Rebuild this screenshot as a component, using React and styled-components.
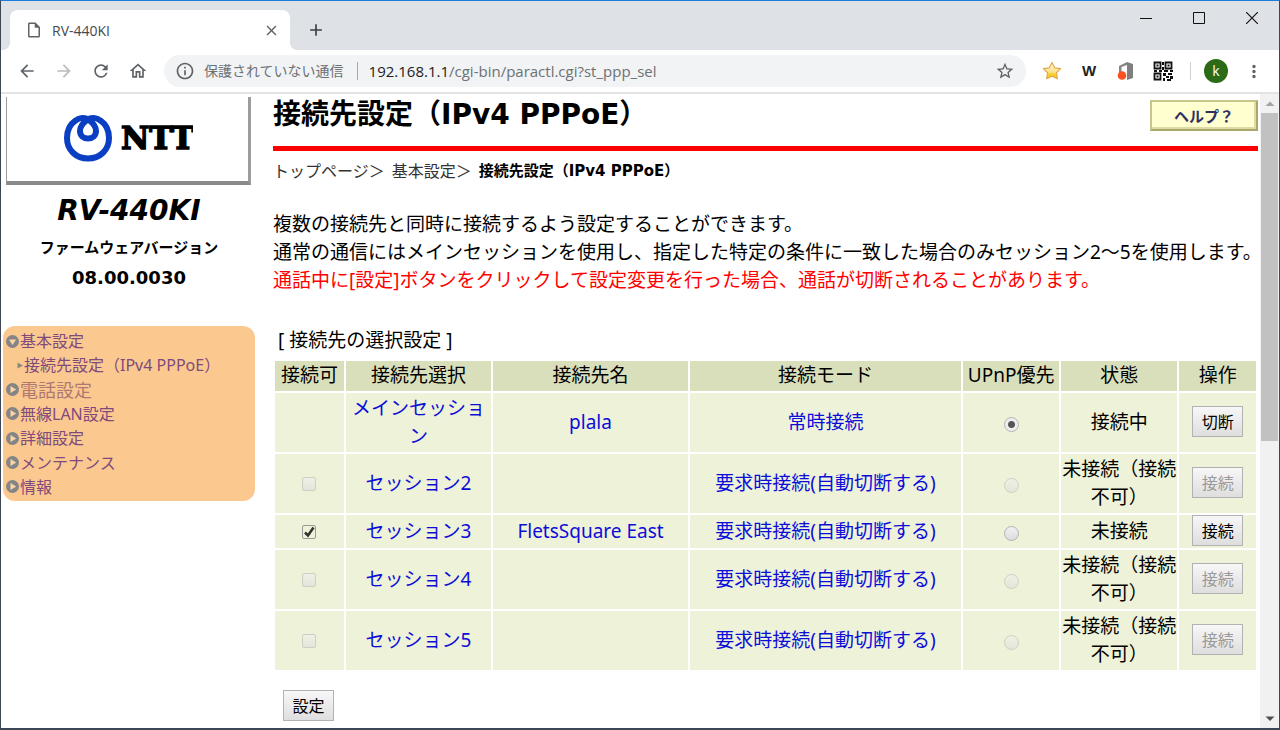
import React, { useState } from "react";
import styled, { createGlobalStyle, css } from "styled-components";
import {
  MdAdd,
  MdArrowBack,
  MdArrowForward,
  MdClose,
  MdInfoOutline,
  MdMoreVert,
  MdOutlineHome,
  MdOutlineInsertDriveFile,
  MdRefresh,
  MdStarBorder,
} from "react-icons/md";

const uiFont = `"Open Sans", "Noto Sans CJK JP", sans-serif`;
const pageFont = `"Noto Sans", "Noto Sans CJK JP", sans-serif`;
const boldFont = `"DejaVu Sans", "Noto Sans CJK JP", sans-serif`;

const GlobalStyle = createGlobalStyle`
  * {
    box-sizing: border-box;
  }

  body {
    margin: 0;
    background-color: #fff;
    font-family: ${pageFont};
    color: #000;
  }

  button,
  input {
    margin: 0;
    font-family: inherit;
  }

  a {
    text-decoration: none;
  }
`;

const Window = styled.div`
  display: flex;
  flex-direction: column;
  height: 100vh;
  overflow: hidden;
  border: 1px solid #3c4654;
  border-top-color: #1a7bd9;
  border-bottom-width: 2px;
`;

/* ---------- browser ---------- */

const TabStrip = styled.div`
  display: flex;
  align-items: flex-end;
  flex: none;
  height: 49px;
  padding-left: 9px;
  background-color: #dee1e6;
`;

const Tab = styled.div`
  position: relative;
  display: flex;
  align-items: center;
  gap: 9px;
  width: 280px;
  height: 40px;
  padding: 0 10px 0 15px;
  border-radius: 8px 8px 0 0;
  background-color: #fff;
  font-family: ${uiFont};
  font-size: 14px;
  color: #45494d;

  &::before,
  &::after {
    content: "";
    position: absolute;
    bottom: 0;
    width: 8px;
    height: 8px;
  }

  &::before {
    right: 100%;
    background: radial-gradient(circle at 0 0, #dee1e6 8px, #fff 8px);
  }

  &::after {
    left: 100%;
    background: radial-gradient(circle at 100% 0, #dee1e6 8px, #fff 8px);
  }
`;

const TabTitle = styled.span`
  flex: 1;
`;

const IconButton = styled.button`
  display: flex;
  justify-content: center;
  align-items: center;
  flex: none;
  width: ${({ $width }) => $width || 20}px;
  height: 20px;
  padding: 0;
  border: none;
  background: none;
  color: ${({ $color }) => $color || "#5f6368"};
`;

const NewTab = styled.div`
  display: flex;
  align-items: center;
  height: 40px;
  padding-left: 16px;
`;

const WindowControls = styled.div`
  display: flex;
  align-items: center;
  align-self: flex-start;
  gap: 33px;
  height: 34px;
  margin-left: auto;
  padding-right: 17px;
`;

const Toolbar = styled.div`
  display: flex;
  align-items: center;
  flex: none;
  height: 44px;
  padding: 0 15px 0 16px;
  border-bottom: 2px solid #e2e3e5;
  background-color: #fff;
`;

const NavButtons = styled.div`
  display: flex;
  gap: 17px;
  margin-right: 16px;
`;

const AddressBar = styled.div`
  display: flex;
  align-items: center;
  flex: 1;
  height: 32px;
  padding: 0 11px;
  border-radius: 16px;
  background-color: #f1f3f4;
  font-family: ${uiFont};
  font-size: 15px;
  color: #6d7175;
`;

const NotSecure = styled.span`
  margin-left: 9px;
  padding-right: 13px;
  border-right: 1px solid #a5a8ab;
  font-size: 14px;
  line-height: 18px;
`;

const Url = styled.span`
  flex: 1;
  padding-left: 11px;
`;

const Host = styled.span`
  color: #202124;
`;

const Extensions = styled.div`
  display: flex;
  align-items: center;
  gap: 17px;
  margin-left: 16px;
`;

const WordBadge = styled.span`
  width: 20px;
  font-family: "Liberation Sans", sans-serif;
  font-size: 15px;
  font-weight: bold;
  line-height: 20px;
  text-align: center;
  color: #222;
`;

const Separator = styled.span`
  width: 1px;
  height: 18px;
  margin-right: 1px;
  background-color: #cfd1d4;
`;

const Avatar = styled.span`
  width: 24px;
  height: 24px;
  margin: 0 -1px 0 -5px;
  border-radius: 50%;
  background-color: #2b6a17;
  font-family: ${uiFont};
  font-size: 14px;
  line-height: 23px;
  text-align: center;
  color: #fff;
`;

/* ---------- page ---------- */

const Viewport = styled.div`
  display: flex;
  flex: 1;
  min-height: 0;
`;

const Page = styled.div`
  display: flex;
  flex: 1;
  min-width: 0;
`;

const Sidebar = styled.aside`
  flex: none;
  width: 272px;
  padding: 3px 18px 0 2px;
`;

const LogoBox = styled.div`
  display: flex;
  justify-content: center;
  align-items: center;
  height: 88px;
  margin: 0 4px 0 3px;
  border: solid #9c9c9c;
  border-width: 0 3px 4px 1px;
  border-bottom-color: #8a8a8a;
`;

const ModelName = styled.h2`
  margin: 8px 0 0;
  font-family: ${boldFont};
  font-size: 28px;
  font-style: italic;
  line-height: 36px;
  text-align: center;
`;

const Firmware = styled.p`
  margin: 0;
  padding-top: ${({ $first }) => ($first ? 4 : 0)}px;
  font-family: ${boldFont};
  font-size: ${({ $first }) => ($first ? 15 : 18)}px;
  font-weight: bold;
  line-height: 30px;
  text-align: center;
`;

const Menu = styled.ul`
  display: grid;
  grid-auto-rows: 1fr;
  height: 175px;
  margin: 33px 0 0;
  padding: 3px 0 2px;
  border-radius: 12px;
  background-color: #fbc98f;
  list-style: none;
`;

const MenuItem = styled.li`
  display: flex;
  align-items: center;
  gap: 1px;
  padding-left: ${({ $sub }) => ($sub ? 14 : 3)}px;
  font-size: ${({ $large }) => ($large ? 18 : 16)}px;
  line-height: 24px;
  white-space: nowrap;

  a {
    color: ${({ $large }) => ($large ? "#b07872" : "#804a7c")};
  }
`;

const Main = styled.main`
  flex: 1;
  min-width: 0;
  padding-right: 2px;
`;

const TitleRow = styled.div`
  display: flex;
  justify-content: space-between;
  align-items: flex-start;
  height: 57px;
  border-bottom: 5px solid #f00;
`;

const Title = styled.h1`
  margin: 0;
  font-family: ${boldFont};
  font-size: 28px;
  line-height: 42px;
`;

const HelpButton = styled.button`
  width: 108px;
  height: 31px;
  margin-top: 6px;
  padding: 0;
  border: 2px solid;
  border-color: #c9c68c #aaa66c #aaa66c #c9c68c;
  box-shadow: inset -2px -2px 0 #dedba4;
  background-color: #ffffcf;
  font-size: 15px;
  font-weight: bold;
  line-height: 24px;
  color: #2f3060;
`;

const Breadcrumb = styled.nav`
  display: flex;
  align-items: center;
  gap: 7px;
  height: 37px;
  font-size: 16px;
  color: #333;

  a {
    color: inherit;
  }

  strong {
    font-family: ${boldFont};
    font-size: 15px;
    color: #000;
  }
`;

const Description = styled.p`
  margin: 22px 0 32px;
  font-size: 19px;
  line-height: 28px;
  white-space: nowrap;
`;

const Warning = styled.span`
  color: #f00;
`;

const TableTitle = styled.h3`
  margin: 0 0 5px;
  padding-left: 5px;
  font-size: 19px;
  font-weight: normal;
  line-height: 28px;
`;

const SessionTable = styled.table`
  width: 100%;
  border-spacing: 2px;
  table-layout: fixed;
  font-size: 19px;
  line-height: 28px;
  text-align: center;
`;

const Col = styled.col`
  width: ${({ $share }) => $share}%;
`;

const HeadCell = styled.th`
  padding: 0 0 2px;
  background-color: #dadfbb;
  font-weight: normal;
  white-space: nowrap;
`;

const Cell = styled.td`
  padding: 0 0 2px;
  background-color: #eef2d8;

  a {
    color: #0d0dd8;
  }
`;

const SessionLine = styled.tr`
  height: ${({ $short }) => ($short ? 33 : 59)}px;
`;

const controlFace = css`
  display: block;
  appearance: none;
  border: 1px solid #b4b4b4;
  background: linear-gradient(#f1f1f1, #dcdcdc);

  &:disabled {
    opacity: 0.55;
  }
`;

const CheckBox = styled.input`
  ${controlFace}
  width: 14px;
  height: 14px;
  margin: 2px auto 0;
  border-radius: 2px;

  &:checked {
    border-color: #999;
    background-image: url("data:image/svg+xml,%3Csvg xmlns='http://www.w3.org/2000/svg' viewBox='0 0 12 12'%3E%3Cpath d='M2 6.5l3 3 5.5-8' fill='none' stroke='%23333' stroke-width='2.6'/%3E%3C/svg%3E");
  }
`;

const Radio = styled.input`
  ${controlFace}
  width: 15px;
  height: 15px;
  margin: 5px auto 0;
  border-radius: 50%;

  &:checked {
    background: radial-gradient(circle, #555 3px, #eee 4px);
  }
`;

const PushButton = styled.button`
  height: 31px;
  width: 51px;
  padding: 0;
  border: 1px solid #b2b2b2;
  background: linear-gradient(#f7f7f7, #dedede);
  font-size: 16px;
  line-height: 26px;
  color: #000;

  &:disabled {
    color: #9a9a9a;
  }
`;

const OperationButton = styled(PushButton)`
  display: block;
  margin: 0 auto;
`;

const SubmitRow = styled.div`
  display: flex;
  padding: 18px 10px 0;
`;

const ScrollBar = styled.div`
  display: flex;
  flex-direction: column;
  align-items: center;
  flex: none;
  width: 19px;
  background-color: #f1f1f1;
`;

const ScrollArrow = styled.svg`
  flex: none;
  width: 18px;
  height: 19px;
  fill: ${({ $color }) => $color};
`;

const ScrollTrack = styled.div`
  flex: 1;
  width: 17px;
`;

const ScrollThumb = styled.div`
  height: 55%;
  background-color: #c1c1c1;
`;

const sessions = [
  {
    name: "メインセッション",
    dest: "plala",
    mode: "常時接続",
    status: "接続中",
    action: "切断",
    main: true,
  },
  {
    name: "セッション2",
    mode: "要求時接続(自動切断する)",
    status: "未接続（接続不可）",
    action: "接続",
    disabled: true,
  },
  {
    name: "セッション3",
    dest: "FletsSquare East",
    mode: "要求時接続(自動切断する)",
    status: "未接続",
    action: "接続",
    short: true,
  },
  {
    name: "セッション4",
    mode: "要求時接続(自動切断する)",
    status: "未接続（接続不可）",
    action: "接続",
    disabled: true,
  },
  {
    name: "セッション5",
    mode: "要求時接続(自動切断する)",
    status: "未接続（接続不可）",
    action: "接続",
    disabled: true,
  },
];

const columns = [
  { label: "接続可", share: 7.1 },
  { label: "接続先選択", share: 15 },
  { label: "接続先名", share: 20.1 },
  { label: "接続モード", share: 28 },
  { label: "UPnP優先", share: 9.9 },
  { label: "状態", share: 12 },
  { label: "操作", share: 7.9 },
];

const menuItems = [
  { label: "基本設定", open: true },
  { label: "接続先設定（IPv4 PPPoE）", sub: true },
  { label: "電話設定", large: true },
  { label: "無線LAN設定" },
  { label: "詳細設定" },
  { label: "メンテナンス" },
  { label: "情報" },
];

function MenuMark({ open, sub }) {
  if (sub) {
    return (
      <svg width="6" height="7" viewBox="0 0 6 7">
        <path d="M0.500 0.500L6 3.500L0.500 6.500z" fill="#8a8a7c" />
      </svg>
    );
  }
  return (
    <svg width="13" height="13" viewBox="0 0 13 13">
      <circle cx="6.500" cy="6.500" r="6.500" fill="#858585" />
      <path
        d={open ? "M3 4.500h7L6.500 10z" : "M4.500 3L10.200 6.500L4.500 10z"}
        fill="#fbd5a8"
      />
    </svg>
  );
}

function NttLogo() {
  return (
    <svg width="130" height="50" viewBox="0 0 130 50" role="img" aria-label="NTT">
      <path
        d="M25 5.500C19 1 4 7 4 24C4 36 13 44.500 25 44.500C37 44.500 46 36 46 24C46 7 31 1 25 5.500C21 8 17 12.500 17 17C17 21.500 20.500 24.500 25 24.500C29.500 24.500 33 21.500 33 17C33 12.500 29 8 25 5.500z"
        fill="none"
        stroke="#0a3fc4"
        strokeWidth="6"
        strokeLinejoin="round"
      />
      <text
        x="58"
        y="35"
        fontFamily="DejaVu Serif, serif"
        fontSize="31"
        fontWeight="bold"
        stroke="#000"
        strokeWidth="1.500"
      >
        NTT
      </text>
    </svg>
  );
}

function QrIcon() {
  return (
    <svg width="20" height="20" viewBox="0 0 20 20" fill="#111">
      <path d="M1.500 1.500h6v6h-6zM12.500 1.500h6v6h-6zM1.500 12.500h6v6h-6z" fill="none" stroke="#111" strokeWidth="1.800" />
      <path d="M3.500 3.500h2v2h-2zM14.500 3.500h2v2h-2zM3.500 14.500h2v2h-2z" />
      <path d="M9 1h2v3H9zM9 6h2v3H9zM1 9h3v2H1zM6 9h3v2H6zM11 9h4v2h-4zM17 9h3v2h-3z" />
      <path d="M10 12h3v3h-3zM15 12h4v2h-4zM13 15h3v2h-3zM10 17h2v3h-2zM17 15h3v3h-3zM14 18h4v2h-4z" />
    </svg>
  );
}

function BrowserHeader() {
  return (
    <>
      <TabStrip>
        <Tab>
          <MdOutlineInsertDriveFile size={18} color="#5f6368" />
          <TabTitle>RV-440KI</TabTitle>
          <IconButton aria-label="タブを閉じる" $width={18}>
            <MdClose size={17} />
          </IconButton>
        </Tab>
        <NewTab>
          <IconButton aria-label="新しいタブ" $color="#3c4043">
            <MdAdd size={22} />
          </IconButton>
        </NewTab>
        <WindowControls>
          <IconButton aria-label="最小化" $color="#111">
            <svg width="12" height="12" viewBox="0 0 12 12">
              <path d="M0 6.500h12" stroke="currentColor" />
            </svg>
          </IconButton>
          <IconButton aria-label="最大化" $color="#111">
            <svg width="12" height="12" viewBox="0 0 12 12">
              <path d="M0.500 0.500h11v11h-11z" fill="none" stroke="currentColor" />
            </svg>
          </IconButton>
          <IconButton aria-label="閉じる" $color="#111">
            <svg width="12" height="12" viewBox="0 0 12 12">
              <path d="M0 0l12 12M12 0L0 12" stroke="currentColor" strokeWidth="1.200" />
            </svg>
          </IconButton>
        </WindowControls>
      </TabStrip>
      <Toolbar>
        <NavButtons>
          <IconButton aria-label="戻る">
            <MdArrowBack size={22} />
          </IconButton>
          <IconButton aria-label="進む" $color="#babcbe">
            <MdArrowForward size={22} />
          </IconButton>
          <IconButton aria-label="再読み込み">
            <MdRefresh size={24} />
          </IconButton>
          <IconButton aria-label="ホーム">
            <MdOutlineHome size={22} />
          </IconButton>
        </NavButtons>
        <AddressBar>
          <MdInfoOutline size={20} color="#5f6368" />
          <NotSecure>保護されていない通信</NotSecure>
          <Url>
            <Host>192.168.1.1</Host>/cgi-bin/paractl.cgi?st_ppp_sel
          </Url>
          <IconButton aria-label="ブックマーク">
            <MdStarBorder size={20} />
          </IconButton>
        </AddressBar>
        <Extensions>
          <svg width="20" height="20" viewBox="0 0 20 20">
            <defs>
              <linearGradient id="gold" x1="0" y1="0" x2="0" y2="1">
                <stop offset="0.2" stopColor="#fff0c4" />
                <stop offset="0.6" stopColor="#fbe08a" />
                <stop offset="0.7" stopColor="#f9d030" />
                <stop offset="1" stopColor="#f4c51d" />
              </linearGradient>
            </defs>
            <path
              d="M10 1.500l2.700 5.300 6 0.800-4.300 4.200 1 6-5.400-2.700-5.400 2.700 1-6L1.300 7.600l6-0.800z"
              fill="url(#gold)"
              stroke="#e3a94c"
              strokeWidth="1.200"
              strokeLinejoin="round"
            />
          </svg>
          <WordBadge>W</WordBadge>
          <svg width="20" height="20" viewBox="0 0 20 20">
            <path d="M3 5L11 1v3L5.500 6v6H3z" fill="#868686" />
            <path d="M11 1l6 2v14l-6 2z" fill="#7f7f7f" />
            <circle cx="6" cy="14.500" r="4.300" fill="#fb5020" />
          </svg>
          <QrIcon />
          <Separator />
          <Avatar>k</Avatar>
          <IconButton aria-label="メニュー">
            <MdMoreVert size={23} />
          </IconButton>
        </Extensions>
      </Toolbar>
    </>
  );
}

function SessionRow({ session, index, checked, onCheck, priority, onPriority }) {
  const { name, dest, mode, status, action, disabled, main, short } = session;

  return (
    <SessionLine $short={short}>
      <Cell>
        {!main && (
          <CheckBox
            type="checkbox"
            aria-label={`${name} 接続可`}
            checked={checked}
            disabled={disabled}
            onChange={onCheck}
          />
        )}
      </Cell>
      <Cell>
        <a href={`#session${index + 1}`}>{name}</a>
      </Cell>
      <Cell>{dest && <a href={`#session${index + 1}`}>{dest}</a>}</Cell>
      <Cell>
        <a href={`#mode${index + 1}`}>{mode}</a>
      </Cell>
      <Cell>
        <Radio
          type="radio"
          name="upnp"
          aria-label={`${name} UPnP優先`}
          checked={priority}
          disabled={disabled}
          onChange={onPriority}
        />
      </Cell>
      <Cell>{status}</Cell>
      <Cell>
        <OperationButton disabled={disabled}>{action}</OperationButton>
      </Cell>
    </SessionLine>
  );
}

function App() {
  // セッション3のみ接続可
  const [enabled, setEnabled] = useState([false, false, true, false, false]);
  const [upnp, setUpnp] = useState(0);

  const toggleEnabled = (index) => {
    setEnabled(enabled.map((value, i) => (i === index ? !value : value)));
  };

  return (
    <Window lang="ja">
      <GlobalStyle />
      <BrowserHeader />
      <Viewport>
        <Page>
          <Sidebar>
            <LogoBox>
              <NttLogo />
            </LogoBox>
            <ModelName>RV-440KI</ModelName>
            <Firmware $first>ファームウェアバージョン</Firmware>
            <Firmware>08.00.0030</Firmware>
            <Menu>
              {menuItems.map(({ label, open, sub, large }) => (
                <MenuItem key={label} $sub={sub} $large={large}>
                  <MenuMark open={open} sub={sub} />
                  <a href="#menu">{label}</a>
                </MenuItem>
              ))}
            </Menu>
          </Sidebar>
          <Main>
            <TitleRow>
              <Title>接続先設定（IPv4 PPPoE）</Title>
              <HelpButton>ヘルプ？</HelpButton>
            </TitleRow>
            <Breadcrumb>
              <span>
                <a href="#top">トップページ</a>＞
              </span>
              <span>
                <a href="#basic">基本設定</a>＞
              </span>
              <strong>接続先設定（IPv4 PPPoE）</strong>
            </Breadcrumb>
            <Description>
              複数の接続先と同時に接続するよう設定することができます。
              <br />
              通常の通信にはメインセッションを使用し、指定した特定の条件に一致した場合のみセッション2～5を使用します。
              <br />
              <Warning>
                通話中に[設定]ボタンをクリックして設定変更を行った場合、通話が切断されることがあります。
              </Warning>
            </Description>
            <TableTitle>[ 接続先の選択設定 ]</TableTitle>
            <SessionTable>
              <colgroup>
                {columns.map(({ label, share }) => (
                  <Col key={label} $share={share} />
                ))}
              </colgroup>
              <thead>
                <tr>
                  {columns.map(({ label }) => (
                    <HeadCell key={label}>{label}</HeadCell>
                  ))}
                </tr>
              </thead>
              <tbody>
                {sessions.map((session, index) => (
                  <SessionRow
                    key={session.name}
                    session={session}
                    index={index}
                    checked={enabled[index]}
                    onCheck={() => toggleEnabled(index)}
                    priority={upnp === index}
                    onPriority={() => setUpnp(index)}
                  />
                ))}
              </tbody>
            </SessionTable>
            <SubmitRow>
              <PushButton>設定</PushButton>
            </SubmitRow>
          </Main>
        </Page>
        <ScrollBar>
          <ScrollArrow viewBox="0 0 18 19" $color="#a3a3a3">
            <path d="M4.500 12L9 7.500L13.500 12z" />
          </ScrollArrow>
          <ScrollTrack>
            <ScrollThumb />
          </ScrollTrack>
          <ScrollArrow viewBox="0 0 18 19" $color="#505050">
            <path d="M4.500 7.500L9 12L13.500 7.500z" />
          </ScrollArrow>
        </ScrollBar>
      </Viewport>
    </Window>
  );
}

export default App;
